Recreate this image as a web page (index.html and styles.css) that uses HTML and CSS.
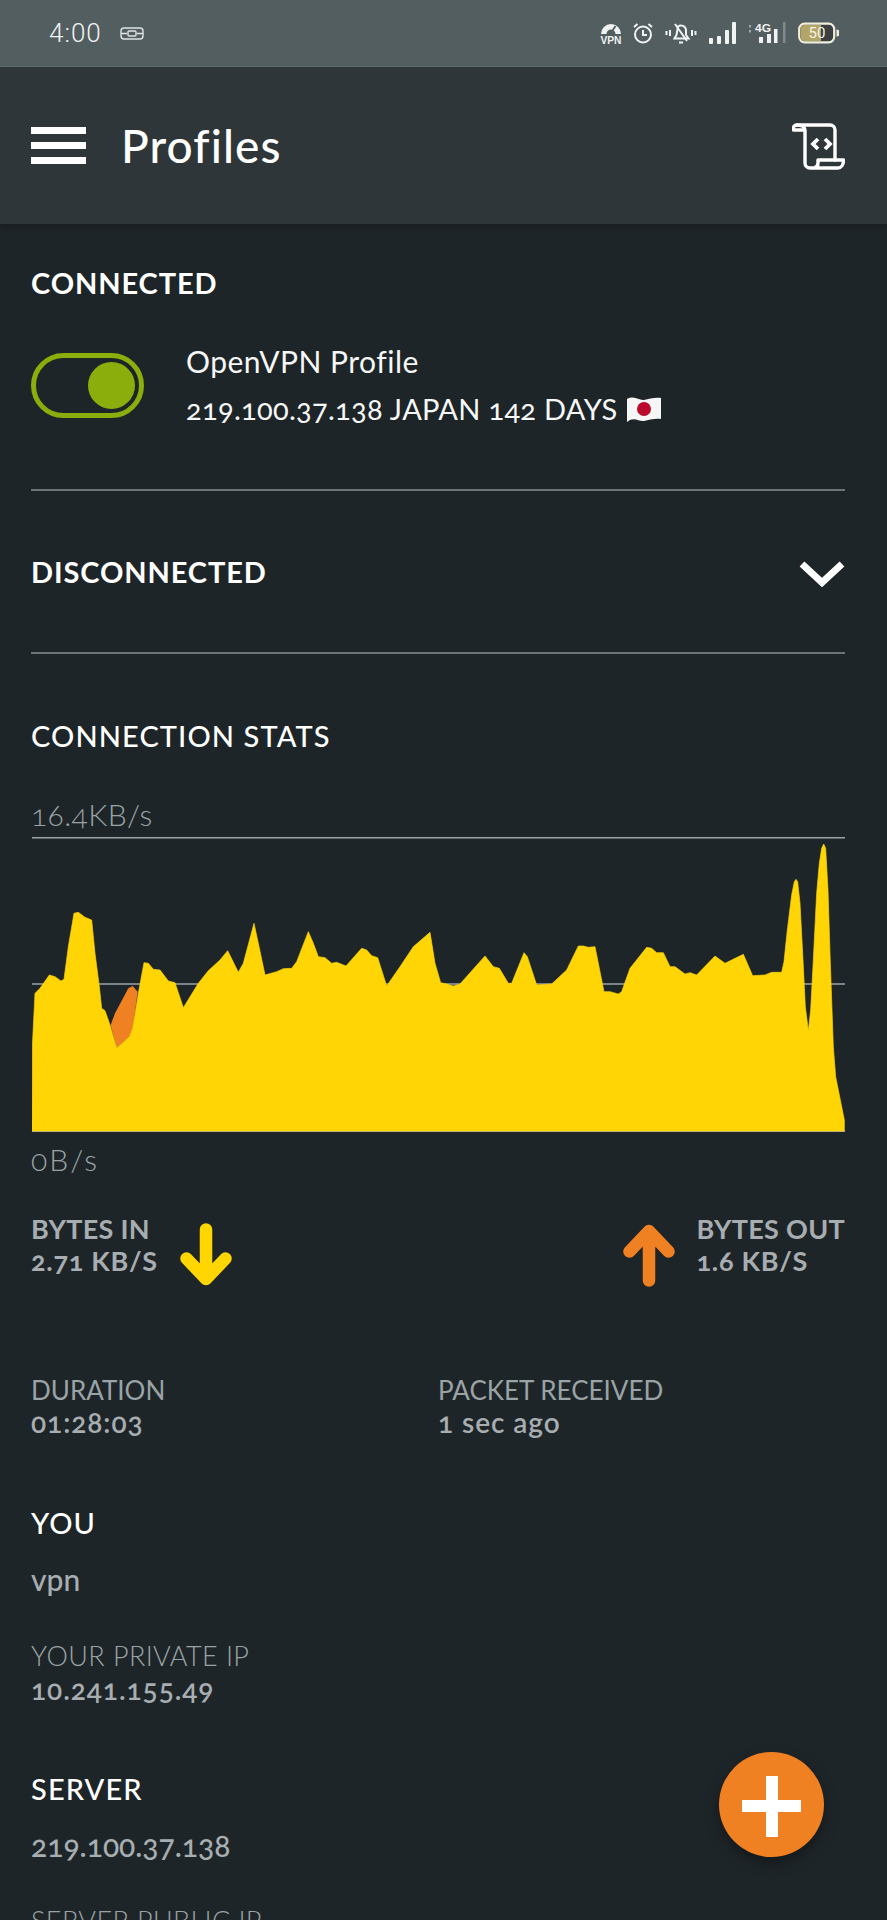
FILE: index.html
```html
<!DOCTYPE html>
<html lang="en">
<head>
  <meta charset="UTF-8" />
  <title>Profiles</title>
  <link rel="stylesheet" href="styles.css">
</head>
<body>

<div class="status-bar">
  <div class="status-left">
    <span class="clock">4:00</span>
    <svg class="ic-usb" viewBox="0 0 24 13" fill="none" stroke="#dfe4e4" stroke-width="1.4">
      <rect x="1" y="1" width="22" height="11" rx="3"/>
      <path d="M1 6.500h6M17 6.500h6"/>
      <rect x="8" y="4" width="8" height="5" rx="1"/>
    </svg>
  </div>
  <div class="status-right">
    <svg class="ic-vpn" viewBox="-2 -2 26 26">
      <path d="M1 12a10 10 0 0 1 20 0h-5.500a4.500 4.500 0 0 0-9 0z" fill="#f1f3f3"/>
      <path d="M11 11l4.500-7" stroke="#525e60" stroke-width="1.800"/>
      <text x="11" y="21.800" class="ic-label" font-size="11.500" textLength="21" lengthAdjust="spacingAndGlyphs">VPN</text>
    </svg>
    <svg class="ic-alarm" viewBox="0 0 20 21" fill="none" stroke="#f1f3f3" stroke-width="2">
      <circle cx="10" cy="12" r="8"/>
      <path d="M10 7.500V12.500H14M1 4.500L4.500 1.500M19 4.500L15.500 1.500"/>
    </svg>
    <svg class="ic-bell" viewBox="0 0 32 22" fill="none" stroke="#f1f3f3" stroke-width="2">
      <path d="M9.500 16.500h14l-2.500-3.500V8a5 5 0 0 0-8-3.500L11.500 13z"/>
      <path d="M10 2l12 17M14 20.500h4M1.500 9v4M5 8v6M27 8v6M30.500 9v4"/>
    </svg>
    <svg class="ic-signal" viewBox="0 0 27 22" fill="#f1f3f3">
      <rect x="0" y="16" width="4" height="6" rx="1"/>
      <rect x="8" y="14" width="4" height="8" rx="1"/>
      <rect x="16" y="8" width="4" height="14" rx="1"/>
      <rect x="23" y="0" width="4" height="22" rx="1"/>
    </svg>
    <svg class="ic-4g" viewBox="0 0 38 22" fill="#f1f3f3">
      <text x="15" y="9.500" class="ic-label" font-size="11" textLength="16" lengthAdjust="spacingAndGlyphs">4G</text>
      <rect x="11" y="15" width="4" height="6"/>
      <rect x="19" y="12" width="4" height="9"/>
      <rect x="26" y="7" width="3.500" height="14"/>
      <rect x="35" y="0" width="2.500" height="21" opacity=".3"/>
      <rect x="1" y="3" width="2" height="2.500" opacity=".5"/>
      <rect x="1" y="8" width="2" height="2.500" opacity=".5"/>
    </svg>
    <svg class="ic-battery" viewBox="0 0 41 21">
      <rect x="1.200" y="1.200" width="35" height="18.600" rx="5.500" fill="#3a4042" stroke="#f1efdc" stroke-width="2.200"/>
      <path d="M2.500 7a4 4 0 0 1 4-4.500H23v16H6.500a4 4 0 0 1-4-4.500z" fill="#b3a468"/>
      <path d="M38.500 7a3 3 0 0 1 0 7z" fill="#f1efdc"/>
      <text x="19" y="15.800" class="ic-batt" font-size="15">50</text>
    </svg>
  </div>
</div>

<header class="app-bar">
  <div class="hamburger"><span></span><span></span><span></span></div>
  <h1 class="app-title">Profiles</h1>
  <svg class="ic-log" viewBox="0 0 53 48" fill="none" stroke="#fff" stroke-width="3.400" stroke-linejoin="round" stroke-linecap="round">
    <path d="M5 3H38a5 5 0 0 1 5 5V38"/>
    <path d="M5 3C2 3 1 5 1.500 8H13M5 3c5 0 8 2 8 5V41a5 5 0 0 0 5 5H46c3 0 5.500-3 5.500-8H26v3a5 5 0 0 1-4 5"/>
    <path d="M26 17l-5 5 5 5M33 17l5 5-5 5" stroke-width="3.800" stroke-linecap="butt" stroke-linejoin="miter"/>
  </svg>
</header>

<main class="content">
  <h2 class="sec-title connected-title">CONNECTED</h2>
  <div class="profile-row">
    <div class="toggle"><span class="knob"></span></div>
    <div class="profile-text">
      <div class="profile-name">OpenVPN Profile</div>
      <div class="profile-sub">219.100.37.138 JAPAN 142 DAYS
        <svg class="flag" viewBox="0 0 36 30">
          <path d="M1 5c8-4 12 2 17 1s11-3 17-2v21c-6-1-12 1-17 2S8 22 1 28z" fill="#f6f6f6"/>
          <circle cx="18" cy="15" r="7" fill="#bc0a2c"/>
        </svg>
      </div>
    </div>
  </div>

  <div class="disconnected-row">
    <h2 class="sec-title">DISCONNECTED</h2>
    <svg class="chevron" viewBox="0 0 46 26" fill="none" stroke="#fff" stroke-width="7">
      <path d="M3 3L23 21.500L43 3"/>
    </svg>
  </div>

  <h2 class="sec-title stats-title">CONNECTION STATS</h2>
  <div class="chart-label top-label">16.4KB/s</div>
  <svg class="chart" viewBox="96 171 2439 885">
    <g stroke="#9aa3a6" stroke-width="5">
      <line x1="96" y1="173" x2="2535" y2="173"/>
      <line x1="96" y1="612" x2="2535" y2="612"/>
      <line x1="96" y1="1054" x2="2535" y2="1054"/>
    </g>
    <polygon fill="#f08122" points="332,735 345,700 385,625 398,618 413,635 398,745 388,770 350,805"/>
    <polygon fill="#ffd505" stroke="#ffd505" stroke-width="2" stroke-linejoin="round" points="96,1053 97,800 105,640 120,625 148,585 165,590 183,603 192,598 205,500 222,400 235,397 255,412 275,420 285,520 298,620 305,685 315,692 330,735 350,805 388,770 398,745 415,640 432,548 445,550 460,568 480,570 505,603 525,608 550,683 595,610 625,572 660,540 683,512 715,577 730,550 762,430 775,490 795,585 830,575 850,566 875,565 890,545 925,455 940,490 955,530 975,533 995,550 1010,547 1038,558 1085,505 1100,510 1115,527 1133,533 1160,618 1200,560 1240,500 1290,457 1305,550 1322,608 1340,612 1360,618 1380,612 1455,528 1480,560 1498,565 1525,610 1535,610 1572,518 1582,530 1610,615 1655,612 1700,570 1735,498 1750,498 1765,502 1785,500 1812,635 1830,635 1855,642 1865,635 1890,565 1940,502 1955,505 1970,518 1990,518 2010,560 2025,560 2055,582 2070,578 2090,585 2145,528 2175,550 2230,523 2258,587 2295,585 2315,577 2345,577 2352,545 2362,450 2375,345 2383,305 2388,298 2393,305 2400,370 2408,520 2416,680 2425,752 2432,690 2440,540 2450,340 2458,250 2465,205 2471,192 2477,205 2484,330 2490,520 2500,800 2507,890 2533,1020 2533,1053"/>
  </svg>
  <div class="chart-label zero-label">0B/s</div>

  <div class="bytes-row">
    <div class="bytes-side">
      <div class="bytes-text">
        <div class="bytes-label">BYTES IN</div>
        <div class="bytes-value">2.71 KB/S</div>
      </div>
      <svg class="arrow" viewBox="0 0 52 64" fill="none" stroke="#ffd600" stroke-width="12.500" stroke-linecap="round" stroke-linejoin="round">
        <path d="M26 6.500V56M6.500 35.500L26 56L45.500 35.500"/>
      </svg>
    </div>
    <div class="bytes-side">
      <svg class="arrow" viewBox="0 0 52 64" fill="none" stroke="#f08122" stroke-width="12.500" stroke-linecap="round" stroke-linejoin="round">
        <path d="M26 57.500V8M6.500 28.500L26 8L45.500 28.500"/>
      </svg>
      <div class="bytes-text">
        <div class="bytes-label">BYTES OUT</div>
        <div class="bytes-value">1.6 KB/S</div>
      </div>
    </div>
  </div>

  <div class="info-grid">
    <div>
      <div class="info-label">DURATION</div>
      <div class="info-value">01:28:03</div>
    </div>
    <div>
      <div class="info-label">PACKET RECEIVED</div>
      <div class="info-value">1 sec ago</div>
    </div>
  </div>

  <h2 class="sec-title you-title">YOU</h2>
  <div class="plain-value">vpn</div>
  <div class="info-label private-label">YOUR PRIVATE IP</div>
  <div class="info-value">10.241.155.49</div>

  <h2 class="sec-title server-title">SERVER</h2>
  <div class="plain-value">219.100.37.138</div>
  <div class="info-label public-label">SERVER PUBLIC IP</div>
</main>

<button class="fab"><span class="plus-h"></span><span class="plus-v"></span></button>

</body>
</html>
```

FILE: styles.css
```css
* { box-sizing: border-box; }
html, body { height: 1920px; }
body {
  margin: 0;
  position: relative;
  overflow: hidden;
  background-color: #1e2528;
  color: #fff;
  font-family: Lato, "Open Sans", sans-serif;
  font-variant-numeric: oldstyle-nums;
}
.status-bar {
  height: 67px;
  padding: 0 48px 0 49px;
  display: flex;
  justify-content: space-between;
  align-items: center;
  background-color: #525e60;
  border-bottom: 1px solid #626d6f;
}
.status-left { display: flex; align-items: center; gap: 18px; }
.clock {
  font-family: Roboto, sans-serif;
  font-size: 26px;
  font-weight: 300;
  letter-spacing: 1px;
  color: #f1f3f3;
  font-variant-numeric: normal;
}
.ic-usb { width: 24px; height: 13px; }
.status-right { display: flex; align-items: center; }
.status-right svg { height: 22px; flex: none; }
.status-right .ic-vpn { width: 26px; height: 26px; margin: 0 9px 0 -2px; }
.ic-alarm { width: 20px; margin-right: 12px; }
.ic-bell { width: 32px; margin-right: 12px; }
.ic-signal { width: 27px; margin-right: 12px; }
.ic-4g { width: 38px; margin-right: 12px; }
.ic-battery { width: 41px; }
.ic-label {
  font-family: "Liberation Sans", sans-serif;
  font-weight: 700;
  text-anchor: middle;
  fill: #f1f3f3;
}
.ic-batt {
  font-family: Roboto, sans-serif;
  font-weight: 400;
  font-variant-numeric: normal;
  text-anchor: middle;
  fill: #f5f3e2;
}

.app-bar {
  height: 157px;
  padding: 0 42px 0 31px;
  display: flex;
  align-items: center;
  background-color: #2f3639;
  box-shadow: 0 3px 6px rgba(0, 0, 0, 0.2);
}
.hamburger {
  width: 55px;
  height: 37px;
  display: flex;
  flex-direction: column;
  justify-content: space-between;
}
.hamburger span { height: 7px; background-color: #fff; }
.app-title {
  margin: 0 0 0 35px;
  flex: 1;
  font-size: 46px;
  font-weight: 500;
  letter-spacing: 1.100px;
  line-height: 50px;
}
.ic-log { width: 53px; height: 48px; }

.content { padding: 0 42px 0 31px; }
.sec-title {
  margin: 0;
  font-size: 29px;
  font-weight: 700;
  letter-spacing: 0.900px;
  line-height: 40px;
}
.connected-title { margin-top: 39px; }
.profile-row {
  margin-top: 35px;
  padding-bottom: 57px;
  display: flex;
  align-items: center;
  gap: 42px;
  border-bottom: 2px solid #6b7476;
}
.toggle {
  width: 113px;
  height: 65px;
  padding-right: 4px;
  display: flex;
  align-items: center;
  justify-content: flex-end;
  border: 5px solid #8bae0c;
  border-radius: 33px;
}
.knob {
  width: 47px;
  height: 47px;
  border-radius: 50%;
  background-color: #8bae0c;
}
.profile-text { line-height: 47px; color: #f6f7f7; }
.profile-name { font-size: 30px; letter-spacing: 0.500px; }
.profile-sub {
  display: flex;
  align-items: center;
  gap: 8px;
  font-size: 29px;
  letter-spacing: 0.300px;
}
.flag { width: 36px; height: 30px; }

.disconnected-row {
  height: 163px;
  display: flex;
  justify-content: space-between;
  align-items: center;
  border-bottom: 2px solid #6b7476;
}
.chevron { width: 46px; height: 26px; margin-top: 4px; }

.stats-title, .you-title, .server-title {
  font-weight: 500;
  letter-spacing: 1.100px;
}
.stats-title { margin-top: 62px; }
.top-label { margin-top: 38px; }
.chart-label {
  font-size: 30px;
  font-weight: 300;
  letter-spacing: 0.400px;
  line-height: 40px;
  color: #9aa3a6;
}
.chart {
  width: 813px;
  height: 295px;
  margin: 3px 0 0 1px;
  display: block;
}
.zero-label { margin-top: 7px; letter-spacing: 2px; }

.bytes-row {
  margin-top: 33px;
  display: flex;
  justify-content: space-between;
  align-items: flex-start;
}
.bytes-side { display: flex; gap: 22px; }
.bytes-text { margin-top: 1px; }
.bytes-label, .bytes-value {
  font-size: 27px;
  font-weight: 700;
  line-height: 32px;
  color: #a7adb0;
}
.bytes-label { letter-spacing: 0.300px; }
.bytes-value { letter-spacing: 0.700px; }
.arrow { width: 52px; height: 64px; margin-top: 11px; }

.info-grid {
  margin-top: 89px;
  display: grid;
  grid-template-columns: 407px 1fr;
}
.info-label {
  font-size: 26px;
  line-height: 28px;
  color: #9aa3a6;
}
.info-value {
  font-size: 28px;
  font-weight: 600;
  letter-spacing: 0.950px;
  line-height: 36px;
  margin-bottom: 2px;
  color: #a7adb0;
}
.you-title { margin-top: 61px; }
.plain-value {
  margin-top: 16px;
  font-size: 30px;
  font-weight: 500;
  line-height: 40px;
  color: #a7adb0;
}
.private-label, .public-label {
  font-size: 27px;
  font-weight: 300;
  letter-spacing: 0.400px;
}
.private-label { margin-top: 43px; margin-bottom: 1px; }
.server-title { margin-top: 62px; }
.server-title + .plain-value { margin-top: 16px; }
.public-label { margin-top: 42px; }

.fab {
  position: absolute;
  left: 719px;
  top: 1752px;
  width: 105px;
  height: 105px;
  border: none;
  border-radius: 50%;
  background-color: #f08122;
  box-shadow: 0 6px 14px rgba(0, 0, 0, 0.35);
}
.plus-h, .plus-v {
  position: absolute;
  background-color: #fff;
}
.plus-h { left: 23px; top: 48px; width: 59px; height: 12px; }
.plus-v { left: 47px; top: 24px; width: 12px; height: 61px; }
```
